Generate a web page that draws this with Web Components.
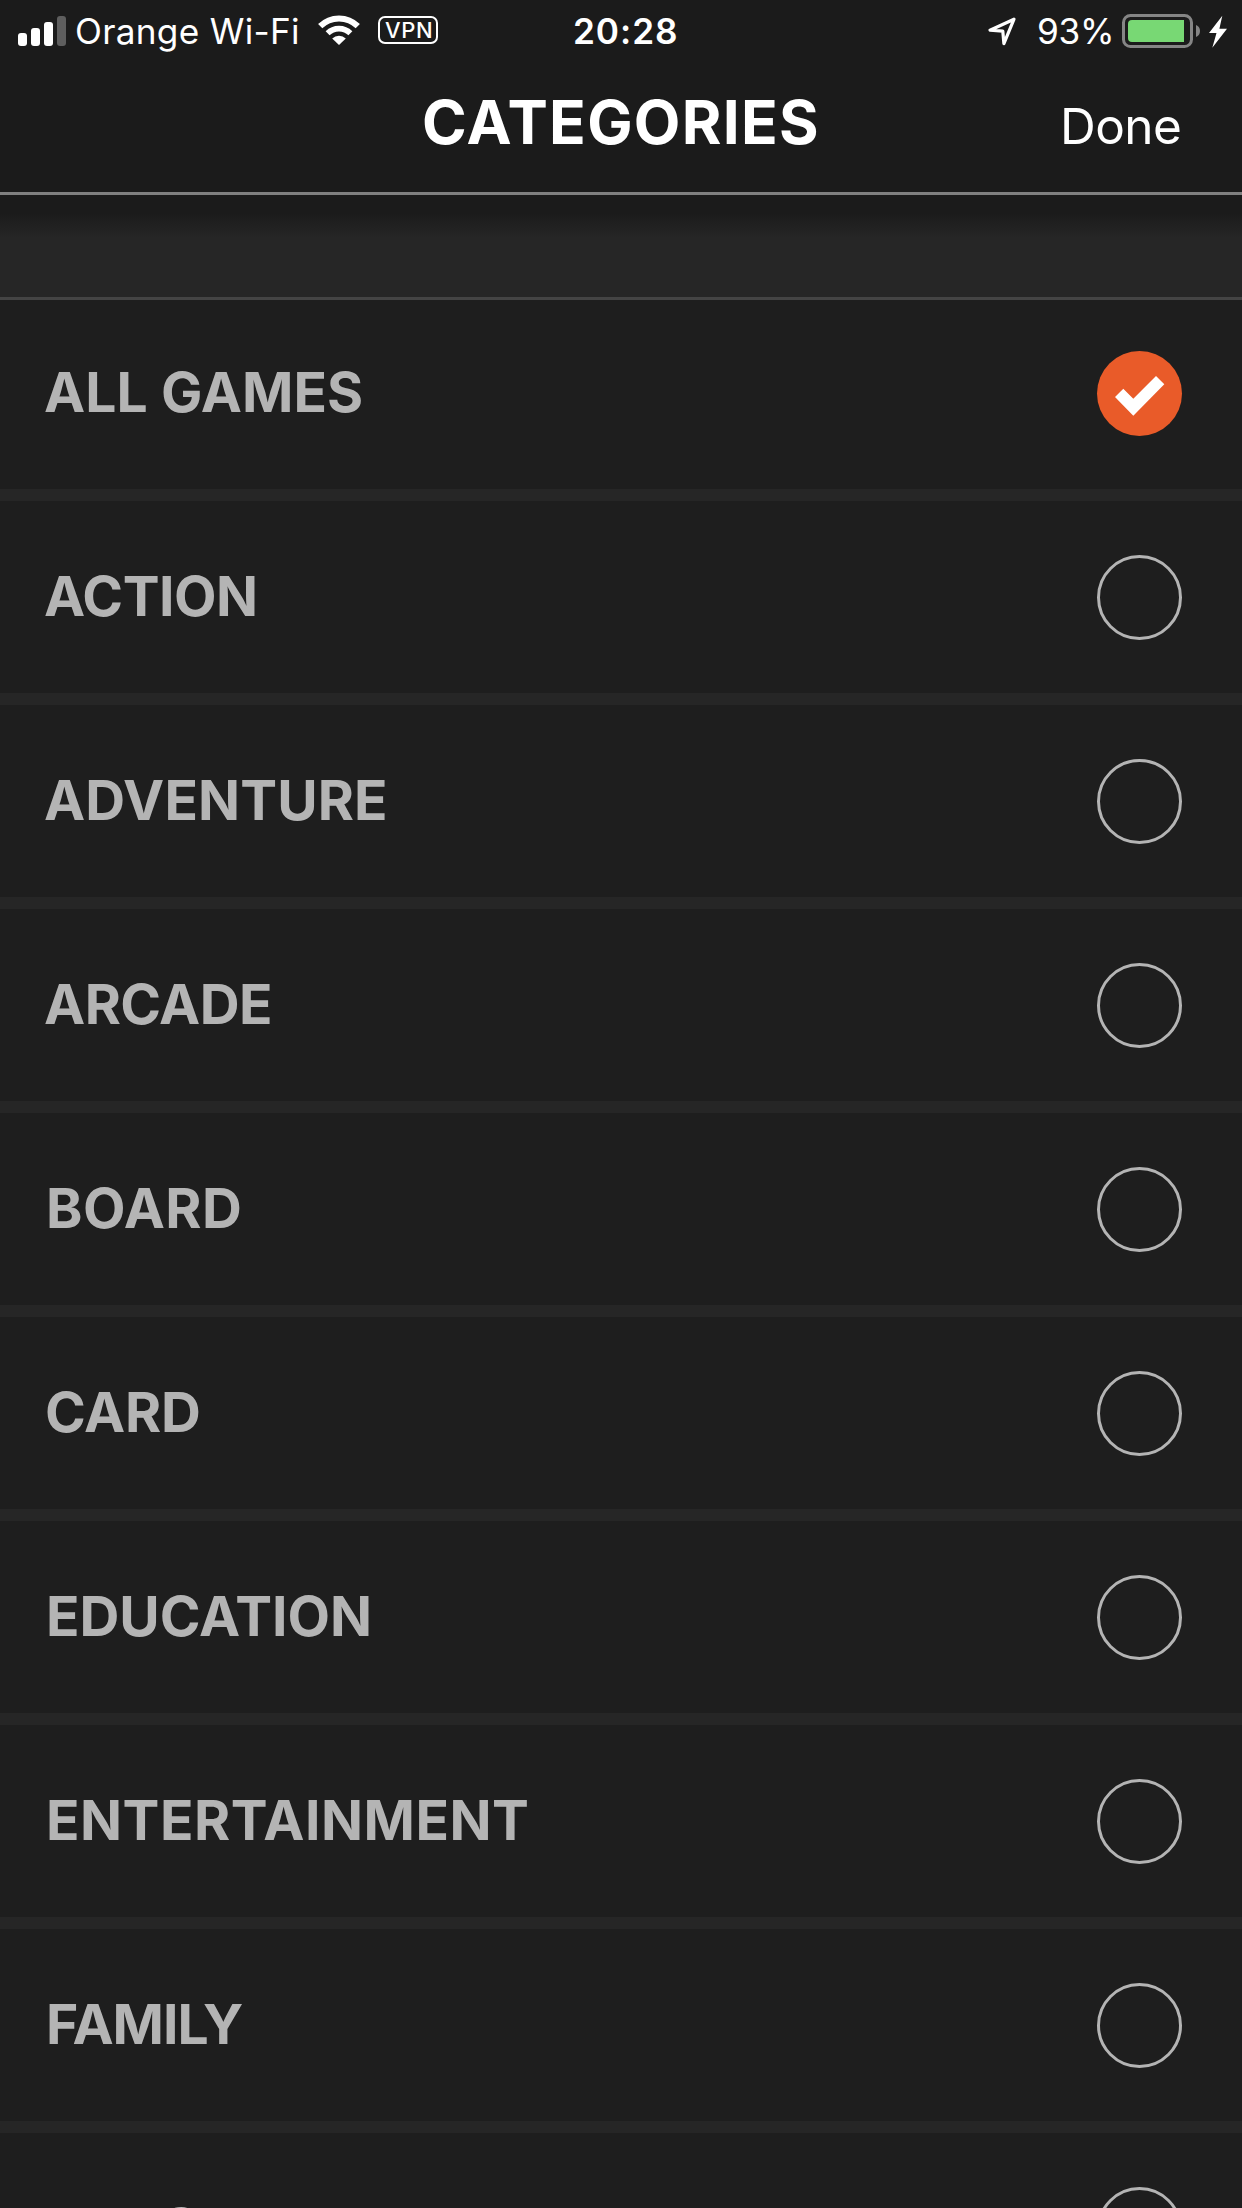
<!DOCTYPE html>
<html lang="en">
<head>
<meta charset="utf-8">
<title>Categories</title>
<style>
  html, body { margin: 0; height: 2208px; overflow: hidden; background: #262626; }
  body { font-family: Inter, "Liberation Sans", sans-serif; color: #fff; }
</style>
</head>
<body>
<categories-screen></categories-screen>

<script>
const define = (name, html, setup) => {
  const template = document.createElement('template');
  template.innerHTML = html;
  customElements.define(name, class extends HTMLElement {
    connectedCallback() {
      if (this.shadowRoot) return;
      this.attachShadow({ mode: 'open' }).append(template.content.cloneNode(true));
      if (setup) setup(this, this.shadowRoot);
    }
  });
};

/* Single-line label whose tracking is adjusted so its ink fills a given width. */
const measureContext = document.createElement('canvas').getContext('2d');
define('tracked-text', `
  <style>
    :host { display: block; flex: none; white-space: nowrap; line-height: 1.2; }
    span { display: block; }
  </style>
  <span><slot></slot></span>`, (host, root) => {
  const text = host.textContent;
  const cs = getComputedStyle(host);
  const target = parseFloat(host.getAttribute('width'));
  measureContext.font = `${cs.fontWeight} ${cs.fontSize} ${cs.fontFamily}`;
  const m = measureContext.measureText(text);
  const ink = m.actualBoundingBoxLeft + m.actualBoundingBoxRight;
  host.style.width = target + 'px';
  const span = root.querySelector('span');
  span.style.letterSpacing = (target - ink) / (text.length - 1) + 'px';
  span.style.marginLeft = m.actualBoundingBoxLeft + 'px';
});

define('signal-bars', `
  <style>
    :host { display: flex; align-items: flex-end; gap: 4px; height: 30px; }
    i { width: 9px; border-radius: 3px; background: #fff; }
  </style>
  <i style="height:13px"></i><i style="height:18px"></i><i style="height:24px"></i>
  <i style="height:30px;background:#5e5e5e"></i>`);

define('wifi-icon', `
  <style>:host { display: block; } svg { display: block; }</style>
  <svg width="42" height="30" viewBox="0 0 42 30" fill="none">
    <path d="M2.2 11.2A26.6 26.6 0 0 1 39.8 11.2" stroke="#fff" stroke-width="6"/>
    <path d="M9.6 18.3A16.2 16.2 0 0 1 32.4 18.3" stroke="#fff" stroke-width="5.6"/>
    <path d="M21 30L14.2 23.4A9.8 9.8 0 0 1 27.8 23.4Z" fill="#fff"/>
  </svg>`);

define('vpn-badge', `
  <style>
    :host { display: flex; align-items: center; justify-content: center; box-sizing: border-box;
      width: 60px; height: 28px; border: 2px solid #fff; border-radius: 7px;
      font-size: 22px; font-weight: 500; }
  </style>
  <tracked-text width="46">VPN</tracked-text>`);

define('location-icon', `
  <style>:host { display: block; } svg { display: block; }</style>
  <svg width="30" height="30" viewBox="0 0 30 30" fill="none">
    <path d="M27 3.2L3 14.2L15.8 15.1L16.9 27.6Z" stroke="#fff" stroke-width="3.2" stroke-linejoin="round"/>
  </svg>`);

define('battery-icon', `
  <style>:host { display: block; } svg { display: block; }</style>
  <svg width="106" height="34" viewBox="0 0 106 34">
    <rect x="1.5" y="1.5" width="68" height="31" rx="7" fill="none" stroke="#858585" stroke-width="3"/>
    <path d="M10 6H62V28H10Q6 28 6 24V10Q6 6 10 6Z" fill="#78d874"/>
    <path d="M74 11Q78 12.5 78 17T74 23Z" fill="#858585"/>
    <path d="M100.3 1.7L87 19H94.5L90.3 33.7L105 14.7H97.4Z" fill="#fff"/>
  </svg>`);

define('status-bar', `
  <style>
    :host { display: flex; align-items: center; justify-content: space-between; box-sizing: border-box;
      height: 62px; padding: 0 14px 0 18px; font-size: 35.2px; }
    div { display: flex; align-items: center; }
    .left { width: 557px; }
    .right { flex: 1; justify-content: flex-end; }
    signal-bars { margin-right: 11px; }
    wifi-icon { margin: -1px 18px 0 20px; }
    vpn-badge { margin-top: -1px; }
    .time { font-weight: 600; }
    location-icon { margin-right: 22px; }
    battery-icon { margin: 0 0 0 11px; }
  </style>
  <div class="left">
    <signal-bars></signal-bars>
    <tracked-text width="221">Orange Wi-Fi</tracked-text>
    <wifi-icon></wifi-icon>
    <vpn-badge></vpn-badge>
  </div>
  <tracked-text class="time" width="101">20:28</tracked-text>
  <div class="right">
    <location-icon></location-icon>
    <tracked-text width="72">93%</tracked-text>
    <battery-icon></battery-icon>
  </div>`);

define('nav-header', `
  <style>
    :host { display: flex; justify-content: space-between; box-sizing: border-box; height: 133px;
      padding: 0 62px 0 424px; border-bottom: 3px solid #808080; }
    .title { font-size: 60.5px; font-weight: 730; line-height: 120px; }
    .done { font-size: 49.5px; line-height: 128px; }
  </style>
  <tracked-text class="title" width="393">CATEGORIES</tracked-text>
  <tracked-text class="done" width="116">Done</tracked-text>`);

define('radio-mark', `
  <style>
    :host { display: block; box-sizing: border-box; width: 85px; height: 85px; border-radius: 50%;
      border: 3px solid #b4b4b4; }
    svg { display: none; }
    :host([checked]) { border: 0; background: #e95b29; }
    :host([checked]) svg { display: block; }
  </style>
  <svg width="85" height="85" viewBox="0 0 85 85">
    <path d="M18 46L26.3 37.7L36.3 47.7L59 25L67.3 33.3L36.3 64.7Z" fill="#fff"/>
  </svg>`);

define('category-row', `
  <style>
    :host { display: flex; justify-content: space-between; box-sizing: border-box; flex: none;
      height: 192px; padding: 0 60px 0 var(--inset, 49px); background: #1e1e1e; color: #b4b4b4;
      font-size: 55.2px; font-weight: 680; }
    :host([first]) { box-shadow: inset 0 3px #444; }
    tracked-text { line-height: 190px; }
    radio-mark { margin-top: 54px; }
  </style>
  <radio-mark></radio-mark>`, (host, root) => {
  const label = document.createElement('tracked-text');
  label.setAttribute('width', host.getAttribute('width'));
  label.textContent = host.getAttribute('label');
  root.querySelector('radio-mark').before(label);
  root.querySelector('radio-mark').toggleAttribute('checked', host.hasAttribute('selected'));
});

define('categories-screen', `
  <style>
    :host { display: flex; flex-direction: column; width: 1242px; height: 2208px; overflow: hidden; background: #262626; }
    header { flex: none; background: #1b1b1b; }
    .gap { flex: none; height: 102px; background: linear-gradient(#1b1b1b 18px, #262626 43px); }
    main { display: flex; flex-direction: column; gap: 12px; }
    .a { --inset: 45px; }
    .c { --inset: 47px; }
  </style>
  <header><status-bar></status-bar><nav-header></nav-header></header>
  <div class="gap"></div>
  <main>
    <category-row class="a" first selected label="ALL GAMES" width="316"></category-row>
    <category-row class="a" label="ACTION" width="210"></category-row>
    <category-row class="a" label="ADVENTURE" width="340"></category-row>
    <category-row class="a" label="ARCADE" width="225"></category-row>
    <category-row label="BOARD" width="191"></category-row>
    <category-row class="c" label="CARD" width="152"></category-row>
    <category-row label="EDUCATION" width="320"></category-row>
    <category-row label="ENTERTAINMENT" width="478"></category-row>
    <category-row label="FAMILY" width="194"></category-row>
    <category-row label="LIFESTYLE" width="294"></category-row>
  </main>`);
</script>
</body>
</html>
